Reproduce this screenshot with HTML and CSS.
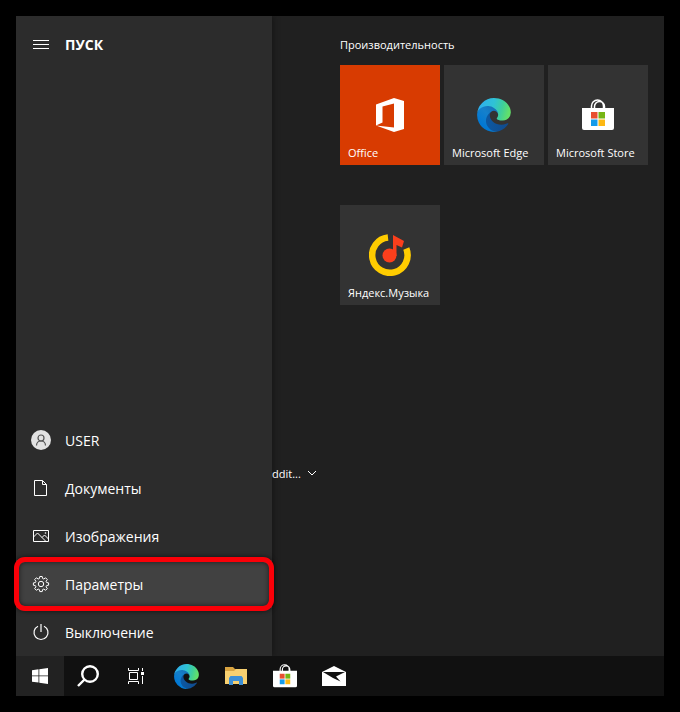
FILE: index.html
```
<!DOCTYPE html>
<html lang="ru">
<head>
<meta charset="utf-8">
<meta name="viewport" content="width=device-width, initial-scale=1">
<title>Пуск</title>
<link rel="stylesheet" href="styles.css">
</head>
<body>
<svg class="defs" aria-hidden="true">
  <defs>
    <linearGradient id="edge-a" gradientUnits="userSpaceOnUse" x1="63" y1="178" x2="242" y2="178"><stop offset="0" stop-color="#0c59a4"/><stop offset="1" stop-color="#114a8b"/></linearGradient>
    <linearGradient id="edge-b" gradientUnits="userSpaceOnUse" x1="150" y1="95" x2="45" y2="215"><stop offset="0" stop-color="#1672b8"/><stop offset=".4" stop-color="#1580cc"/><stop offset="1" stop-color="#0078d4"/></linearGradient>
    <linearGradient id="edge-c" gradientUnits="userSpaceOnUse" x1="20" y1="70" x2="240" y2="130"><stop offset="0" stop-color="#2fb0ec"/><stop offset=".45" stop-color="#2fc2d5"/><stop offset=".75" stop-color="#3fcf9a"/><stop offset="1" stop-color="#62e06a"/></linearGradient>
    <symbol id="edge" viewBox="4 4 258 258">
      <path fill="url(#edge-a)" d="M235.7 195.5a94 94 0 0 1-10.6 4.7 102 102 0 0 1-35.9 6.4c-47.3 0-88.5-32.5-88.5-74.3A31.5 31.5 0 0 1 117.1 105c-42.8 1.8-53.8 46.4-53.8 72.5 0 73.9 68.1 81.4 82.8 81.4 7.9 0 19.8-2.300 27-4.600l1.300-.4a128 128 0 0 0 66.600-52.800 4 4 0 0 0-5.300-5.600z"/>
      <path fill="url(#edge-b)" d="M110.300 246.300A79 79 0 0 1 87.600 225a80.700 80.700 0 0 1 29.500-120c3.100-1.500 8.500-4.100 15.500-4a32.400 32.400 0 0 1 25.700 13 32 32 0 0 1 6.400 18.700c0-.2 24.500-79.600-80-79.600-43.900 0-80 41.700-80 78.200a130 130 0 0 0 12.100 56 128 128 0 0 0 156.400 67.100 75.500 75.500 0 0 1-62.800-8z"/>
      <path fill="url(#edge-c)" d="M156.940 153.780c-.81 1.050-3.300 2.500-3.300 5.660 0 2.610 1.700 5.120 4.720 7.230 14.380 10 41.490 8.680 41.560 8.680a59.560 59.560 0 0 0 30.270-8.350 61.380 61.380 0 0 0 30.430-52.880c.26-22.410-8-37.310-11.340-43.910C228.090 28.760 182.350 4.920 132.610 4.920a128 128 0 0 0-128 126.200c.48-36.540 36.800-66.050 80-66.050 3.500 0 23.460.34 42 10.070 16.340 8.580 24.900 18.940 30.850 29.210 6.180 10.670 7.280 24.150 7.280 29.520s-2.740 13.330-7.800 19.910z"/>
    </symbol>
    <symbol id="store" viewBox="0 0 32 32">
      <path fill="none" stroke="#fff" stroke-width="1.500" d="M9.500 10V7a6 6 0 0 1 12 0v3M12.500 10V7.500a5 5 0 0 1 10 0V10"/>
      <path fill="#fff" d="M0 9h32v20a2 2 0 0 1-2 2H2a2 2 0 0 1-2-2z"/>
      <path fill="#e84f30" d="M9 13h6.500v6.500H9z"/><path fill="#76b514" d="M16.500 13H23v6.500h-6.500z"/>
      <path fill="#159bea" d="M9 20.500h6.500V27H9z"/><path fill="#fdb813" d="M16.500 20.500H23V27h-6.500z"/>
    </symbol>
  </defs>
</svg>

<div class="screen">
  <div class="start">
    <nav class="rail" aria-label="Пуск">
      <button class="rail-item rail-title" type="button">
        <svg width="18" height="18" viewBox="0 0 18 18"><path class="line" d="M1 5.500h16M1 9.500h16M1 13.500h16"/></svg>
        <span>ПУСК</span>
      </button>
      <div class="rail-links">
        <button class="rail-item" type="button">
          <svg width="20" height="20" viewBox="0 0 20 20"><circle cx="10" cy="10" r="10" fill="#e2e2e2"/><g fill="none" stroke="#555" stroke-width="1.200"><circle cx="10" cy="8" r="3"/><path d="M5.500 15.500c0-2.600 2-4.500 4.500-4.500s4.500 1.900 4.500 4.500"/></g></svg>
          <span>USER</span>
        </button>
        <button class="rail-item" type="button">
          <svg width="18" height="18" viewBox="0 0 18 18"><path class="line" d="M2.500 1.500h8l4 4v11h-12zM10.500 1.500v4h4"/></svg>
          <span>Документы</span>
        </button>
        <button class="rail-item" type="button">
          <svg width="18" height="18" viewBox="0 0 18 18"><path class="line" d="M1.500 3.500h15v11h-15zM1.500 10l4-4 8.500 8.500M10 10.500l2.500-2.500 4 4"/><circle cx="13.500" cy="6" r=".8" fill="#fff"/></svg>
          <span>Изображения</span>
        </button>
        <button class="rail-item rail-item-active" type="button">
          <svg width="18" height="18" viewBox="0 0 18 18"><path class="line" stroke-linejoin="round" d="M7.800 1.500h2.400l.4 2 1.200.5 1.800-1.200 1.700 1.700-1.200 1.800.5 1.200 2 .4v2.300l-2 .4-.5 1.200 1.200 1.800-1.700 1.700-1.800-1.200-1.200.5-.4 2H7.800l-.4-2-1.200-.5-1.800 1.200-1.700-1.700 1.200-1.800-.5-1.200-2-.4V7.900l2-.4.5-1.200-1.200-1.800 1.700-1.700L6.200 4l1.200-.5z"/><circle class="line" cx="9" cy="9" r="2.700"/></svg>
          <span>Параметры</span>
        </button>
        <button class="rail-item" type="button">
          <svg width="18" height="18" viewBox="0 0 18 18"><path class="line line-strong" d="M9 1v8M6 3.200a7 7 0 1 0 6 0"/></svg>
          <span>Выключение</span>
        </button>
      </div>
    </nav>

    <div class="apps">
      <button class="app-folder" type="button">
        <span>ddit...</span>
        <svg width="10" height="10" viewBox="0 0 10 10"><path class="line" d="M1 3l4 4 4-4"/></svg>
      </button>
    </div>

    <main class="tiles">
      <h2>Производительность</h2>
      <div class="tile-grid">
        <a class="tile tile-office" href="#">
          <svg width="36" height="36" viewBox="0 0 36 36"><path fill="#fff" d="M4 7.500L22 1l10 3v28l-10 3L4 28.500l18 2V6.500L10.500 9.500v16L4 28.500z"/></svg>
          <span>Office</span>
        </a>
        <a class="tile" href="#">
          <svg width="34" height="34"><use href="#edge"/></svg>
          <span>Microsoft Edge</span>
        </a>
        <a class="tile" href="#">
          <svg width="32" height="32"><use href="#store"/></svg>
          <span>Microsoft Store</span>
        </a>
      </div>
      <div class="tile-grid">
        <a class="tile" href="#">
          <svg width="42" height="42" viewBox="0 0 42 42"><path fill="none" stroke="#fc0" stroke-width="6.500" d="M19 3.500a17.700 17.700 0 1 0 18.300 11"/><circle cx="20.500" cy="21.500" r="7" fill="#fb3f1c"/><path fill="#fb3f1c" d="M24 1l11 6-2 6.500-5.500-2.500v11H24z"/></svg>
          <span>Яндекс.Музыка</span>
        </a>
      </div>
    </main>
  </div>

  <footer class="taskbar">
    <button class="task task-start" type="button" aria-label="Пуск">
      <svg width="16" height="16" viewBox="0 0 16 16"><path fill="#fff" d="M0 2.300l6.500-1v6.200H0zM7.300 1.200L16 0v7.500H7.300zM0 8.300h6.500v6.300L0 13.700zM7.300 8.300H16V16l-8.700-1.200z"/></svg>
    </button>
    <button class="task" type="button" aria-label="Поиск">
      <svg width="22" height="22" viewBox="0 0 22 22"><g fill="none" stroke="#fff" stroke-width="2.400"><circle cx="13" cy="9" r="7.800"/><path d="M7.500 14.500L1 21"/></g></svg>
    </button>
    <button class="task" type="button" aria-label="Представление задач">
      <svg width="16" height="16" viewBox="0 0 16 16"><path class="line" d="M.5 0v2.500h10V0M.5 16v-2.500h10V16M1.500 4.500h8v7h-8zM14.500 0v3M14.500 8v8"/><path fill="#fff" d="M13 4h3v3h-3z"/></svg>
    </button>
    <div class="pinned">
      <button class="task" type="button" aria-label="Microsoft Edge"><svg width="25" height="25"><use href="#edge"/></svg></button>
      <button class="task" type="button" aria-label="Проводник">
        <svg width="22" height="20" viewBox="0 0 22 20"><path fill="#d9a441" d="M0 1h8l2 2h12v4H0z"/><path fill="#f7d070" d="M0 5h9l2-2h11v15H0z"/><path fill="#3c8fd6" d="M4 12l1.500-2h11l1.500 2v7h-4v-4H8v4H4z"/></svg>
      </button>
      <button class="task" type="button" aria-label="Microsoft Store"><svg width="24" height="24"><use href="#store"/></svg></button>
      <button class="task" type="button" aria-label="Почта">
        <svg width="24" height="20" viewBox="0 0 24 20"><path fill="#fff" d="M0 6l12-6 12 6v14H0z"/><path fill="#111" d="M1 6h22l-9 4.500 4.500 5L11 12z"/></svg>
      </button>
    </div>
  </footer>
</div>
</body>
</html>
```
FILE: styles.css
```
* { box-sizing: border-box; }

body {
  margin: 0;
  padding: 16px;
  min-height: 100vh;
  display: flex;
  background: #000;
  color: #fff;
  font-family: "Open Sans", "Noto Sans", sans-serif;
}

button {
  border: 0;
  padding: 0;
  background: none;
  color: inherit;
  font: inherit;
}

svg { flex: none; display: block; }

.defs { position: absolute; width: 0; height: 0; }

.line { fill: none; stroke: #fff; stroke-width: 1; }

.line-strong { stroke-width: 1.2; }

.screen {
  flex: 1;
  display: flex;
  flex-direction: column;
  background: #202020;
}

.start {
  flex: 1;
  display: grid;
  grid-template-columns: 256px 68px 1fr;
}

.rail {
  display: flex;
  flex-direction: column;
  justify-content: space-between;
  padding-top: 4px;
  background: #2c2c2c;
  box-shadow: 2px 0 6px rgba(0, 0, 0, 0.3);
}

.rail-item {
  position: relative;
  display: grid;
  grid-template-columns: 20px 1fr;
  justify-items: center;
  align-items: center;
  gap: 14px;
  width: 100%;
  height: 48px;
  padding-left: 15px;
  font-size: 14px;
  text-align: left;
}

.rail-item span { justify-self: start; }

.rail-title { font-weight: 700; }

.rail-item-active { background: #414141; }

.rail-item-active::after {
  content: "";
  position: absolute;
  inset: -3px -2px;
  border: 5px solid #fa0008;
  border-radius: 11px;
  box-shadow: 0 0 5px rgba(0, 0, 0, 0.6), inset 0 0 5px rgba(0, 0, 0, 0.6);
}

.apps {
  display: flex;
  align-items: flex-end;
  padding-bottom: 172px;
}

.app-folder {
  display: flex;
  align-items: center;
  gap: 6px;
  height: 22px;
  font-size: 11px;
}

.tiles { padding: 20px 16px 0 0; }

.tiles h2 {
  margin: 0 0 11px;
  font-size: 11px;
  line-height: 18px;
  font-weight: 400;
}

.tile-grid {
  display: grid;
  grid-template-columns: repeat(auto-fill, 100px);
  gap: 4px;
  margin-bottom: 40px;
}

.tile {
  display: grid;
  grid-template-rows: 1fr 16px;
  justify-items: center;
  align-items: end;
  gap: 2px;
  height: 100px;
  padding: 0 0 4px;
  background: #333;
  color: #fff;
  font-size: 11px;
  line-height: 16px;
  text-decoration: none;
  white-space: nowrap;
}

.tile svg { align-self: center; margin-top: 22px; }

.tile span { justify-self: start; padding-left: 8px; }

.tile-office { background: #d83b01; }

.taskbar {
  display: flex;
  height: 40px;
  background: #111;
}

.pinned { display: flex; margin-left: 2px; }

.task {
  display: flex;
  align-items: center;
  justify-content: center;
  width: 48px;
}

.pinned .task { width: 49px; }

.task-start { background: #222; }
```
